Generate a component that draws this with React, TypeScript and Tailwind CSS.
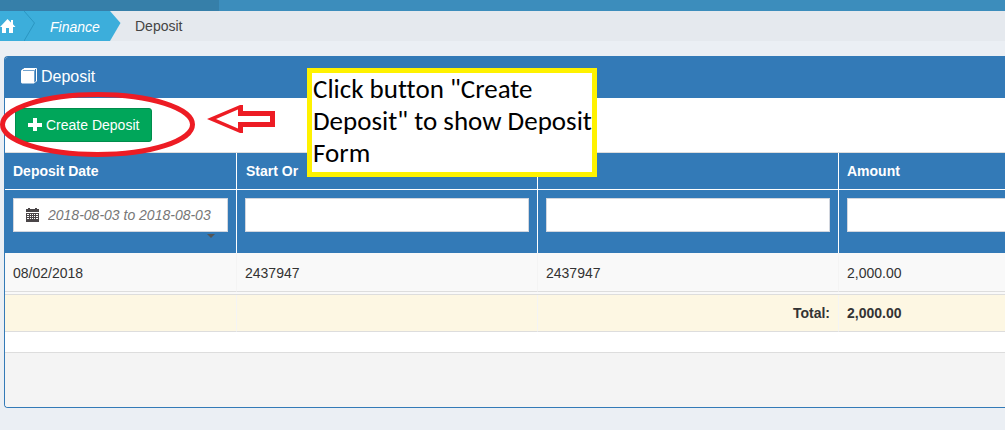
import React from "react";

const cell = "border-r border-b border-r-[#f4f4f4] border-b-[#ddd] px-2 text-left align-middle";
const lastCell = "border-b border-b-[#ddd] px-2 text-left align-middle";
const headCell = "h-[37px] border-r border-b border-white px-2 pb-px text-left font-bold text-white";
const filterCell = "h-[63px] border-r border-r-white px-2 pt-2 align-top";
const filterInput = "block h-[34px] w-full border border-[#d2d6de] bg-white px-3 outline-none";

function HomeIcon() {
  return (
    <svg className="h-4 w-4 shrink-0" viewBox="0 0 16 16" fill="#fff" aria-hidden="true">
      <path d="M7.500 1 0 9h2v6h4v-5h3v5h4V9h2.500L13 6.200V2h-2v2.500z" />
    </svg>
  );
}

function BookIcon() {
  return (
    <svg className="h-4 w-4 shrink-0" viewBox="0 0 16 16" aria-hidden="true">
      <path d="M0 3 2 1h12v13l-1 1.500H1l-1-1z" fill="#fff" />
      <path d="M.500 3 3 .500h12.500V13L14 14.500" fill="none" stroke="#fff" />
      <path d="M2 2.500h11.500V14" fill="none" stroke="#337ab7" strokeWidth=".7" />
    </svg>
  );
}

function PlusIcon() {
  return (
    <svg className="h-[14px] w-[14px] shrink-0" viewBox="0 0 14 14" fill="#fff" aria-hidden="true">
      <path d="M5 0h4v5h5v4H9v4H5V9H0V5h5z" />
    </svg>
  );
}

function CalendarIcon() {
  return (
    <svg className="-mt-px h-[14px] w-[14px] shrink-0" viewBox="0 0 14 14" aria-hidden="true">
      <path d="M0 1h2V0h2v1h5V0h2v1h2v3H0zM0 5h13v9H0z" fill="#4a4648" />
      <path
        d="M1 6h2v1H1zm3 0h1v1H4zm2 0h1v1H6zm2 0h1v1H8zm2 0h2v1h-2zM1 8h2v1H1zm3 0h1v1H4zm2 0h1v1H6zm2 0h1v1H8zm2 0h2v1h-2zM1 10h2v1H1zm3 0h1v1H4zm2 0h1v1H6zm2 0h1v1H8zm2 0h2v1h-2z"
        fill="#fff"
      />
    </svg>
  );
}

function Breadcrumb() {
  return (
    <nav aria-label="Breadcrumb" className="flex h-[30px] items-center bg-[#e5e9ee]">
      <a href="#home" aria-label="Home" className="flex h-full w-6 items-center bg-[#3caedb]">
        <HomeIcon />
      </a>
      <a href="#finance" className="flex h-full items-center bg-[#3caedb] italic text-white">
        <svg className="mr-[15px] h-[30px] w-[11px]" viewBox="0 0 11 30" fill="none" stroke="#2b96c1" aria-hidden="true">
          <path d="M0 0 10.500 12 0 30" />
        </svg>
        <span className="w-[60px] pt-px">Finance</span>
      </a>
      <svg className="h-[30px] w-[11px]" viewBox="0 0 11 30" aria-hidden="true">
        <path d="M0 0 10.500 12 0 30z" fill="#3caedb" />
      </svg>
      <span className="pl-[14px] text-[#444]">Deposit</span>
    </nav>
  );
}

function Annotations() {
  return (
    <>
      <svg className="pointer-events-none absolute top-0 left-0 h-[180px] w-[290px]" viewBox="0 0 290 180" aria-hidden="true">
        <ellipse cx="97.500" cy="124.500" rx="95" ry="30" fill="none" stroke="#ed1c24" strokeWidth="5" />
        <path
          fill="#ed1c24"
          fillRule="evenodd"
          d="M207 119 240 105h3v6h32v16h-32v6h-3zM216 119l22 9.500V122h32v-6h-32v-6.500z"
        />
      </svg>
      <p className="absolute top-[68px] left-[307px] w-[290px] border-[5px] border-[#fff200] bg-white pb-[3px] pl-px font-['Carlito','Calibri','Lato',sans-serif] text-[27px] leading-[32px] whitespace-nowrap text-black [font-variant-ligatures:none]">
        Click button "Create
        <br />
        Deposit" to show Deposit
        <br />
        Form
      </p>
    </>
  );
}

export default function App() {
  return (
    <div className="relative min-h-screen overflow-hidden bg-[#ebeff4] font-['Liberation_Sans',Arial,sans-serif] text-[14px] leading-5 text-[#333]">
      <header className="flex h-[11px] bg-[#3c8dbc]">
        <div className="w-[219px] bg-[#367fa9]" />
      </header>
      <Breadcrumb />
      <main className="pt-[15px] pb-[22px] pl-1">
        <section className="overflow-hidden rounded-l border border-r-0 border-[#337ab7] bg-white">
          <h1 className="flex h-[41px] items-center gap-1 bg-[#337ab7] pb-[3px] pl-4 text-[16px] text-white">
            <BookIcon />
            <span className="pt-px">Deposit</span>
          </h1>
          <div className="flex h-[55px] items-center border-b border-[#ddd] pl-[10px]">
            <button type="button" className="flex h-[34px] items-center gap-1 rounded-[3px] border border-[#008d4c] bg-[#00a65a] px-3 text-white">
              <PlusIcon />
              Create Deposit
            </button>
          </div>
          <table className="w-full table-fixed border-separate border-spacing-0">
            <colgroup>
              <col className="w-[232px]" />
              <col className="w-[301px]" />
              <col className="w-[301px]" />
              <col />
            </colgroup>
            <thead className="bg-[#337ab7]">
              <tr>
                <th className={headCell}>Deposit Date</th>
                <th className={headCell}><span className="pl-px">Start Or</span></th>
                <th className={headCell} aria-label="End Or" />
                <th className="h-[37px] border-b border-white px-2 pb-px text-left font-bold text-white">Amount</th>
              </tr>
              <tr>
                <td className={filterCell}>
                  <label className="flex h-[34px] items-center gap-2 border border-[#d2d6de] bg-white pl-3 text-[#777]">
                    <CalendarIcon />
                    <input aria-label="Deposit date range" defaultValue="2018-08-03 to 2018-08-03" className="w-full min-w-0 bg-transparent italic outline-none" />
                  </label>
                  <svg className="mt-[2px] mr-[13px] ml-auto h-1 w-2" viewBox="0 0 8 4" fill="#555" aria-hidden="true">
                    <path d="M0 0h8L4 4z" />
                  </svg>
                </td>
                <td className={filterCell}>
                  <input aria-label="Start Or" className={filterInput} />
                </td>
                <td className={filterCell}>
                  <input aria-label="End Or" className={filterInput} />
                </td>
                <td className="h-[63px] pt-2 pl-2 align-top">
                  <input aria-label="Amount" className="block h-[34px] w-full border border-r-0 border-[#d2d6de] bg-white px-3 outline-none" />
                </td>
              </tr>
            </thead>
            <tbody className="bg-[#f9f9f9]">
              <tr className="h-[39px] *:pt-px">
                <td className={cell}>08/02/2018</td>
                <td className={cell}>2437947</td>
                <td className={cell}>2437947</td>
                <td className={lastCell}>2,000.00</td>
              </tr>
              <tr>
                <td colSpan={4} className="h-[3px] border-b border-b-[#ddd] p-0" />
              </tr>
            </tbody>
            <tfoot className="bg-[#fdf7e3] font-bold">
              <tr className="h-[37px]">
                <td className={cell} />
                <td className={cell} />
                <td className="border-r border-b border-r-[#f4f4f4] border-b-[#ddd] px-2 text-right">Total:</td>
                <td className={lastCell}>2,000.00</td>
              </tr>
            </tfoot>
          </table>
          <div className="mt-5 h-[55px] border-t border-[#ddd] bg-[#f4f4f4]" />
        </section>
      </main>
      <Annotations />
    </div>
  );
}
